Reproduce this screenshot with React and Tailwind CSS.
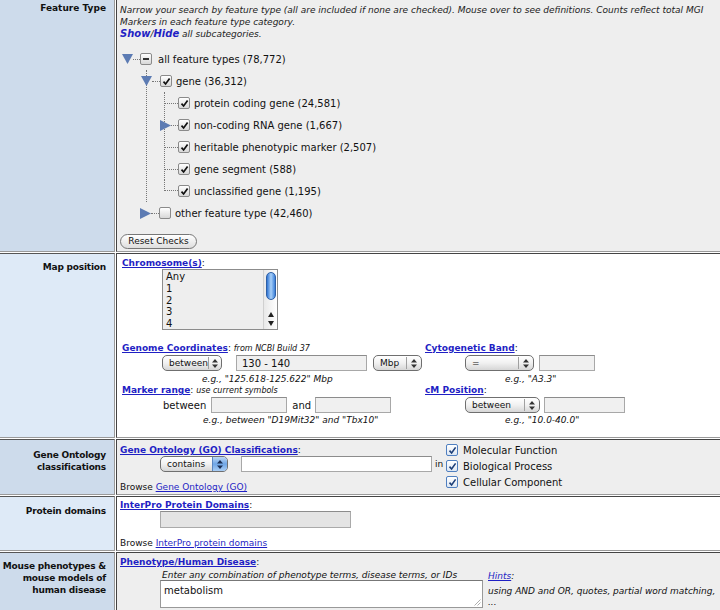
import React from 'react';

const LINK = 'text-[#1f1fc4] underline font-bold';

function Box({ checked = true, minus = false }) {
  return (
    <span className="inline-flex items-center justify-center w-[12px] h-[12px] rounded-[2px] border border-[#8a8a8a] bg-linear-to-b from-white to-[#d8d8d8] shrink-0">
      {checked && (
        <svg width="9" height="9" viewBox="0 0 9 9">
          <path d="M1.5 4.6 L3.6 7 L7.6 1.4" fill="none" stroke="#111" strokeWidth="1.7" />
        </svg>
      )}
      {minus && <span className="w-[6px] h-[2px] bg-[#333]" />}
    </span>
  );
}

function BlueBox() {
  return (
    <span className="inline-flex items-center justify-center w-[12px] h-[12px] rounded-[2px] border border-[#4f7fc0] bg-linear-to-b from-white to-[#dde7f3] shrink-0">
      <svg width="9" height="9" viewBox="0 0 9 9">
        <path d="M1.5 4.6 L3.6 7 L7.6 1.4" fill="none" stroke="#1d3f78" strokeWidth="1.6" />
      </svg>
    </span>
  );
}

function Tri({ dir }) {
  return dir === 'down' ? (
    <svg width="11" height="10" viewBox="0 0 11 10" className="shrink-0">
      <polygon points="0,0 11,0 5.5,10" fill="#5c7bb3" />
    </svg>
  ) : (
    <svg width="11" height="11" viewBox="0 0 11 11" className="shrink-0">
      <polygon points="0,0 11,5.5 0,11" fill="#5c7bb3" />
    </svg>
  );
}

function Dots({ className }) {
  return <span className={`border-t border-dotted border-[#777] shrink-0 ${className}`} />;
}

function Sel({ className, label, blue = false }) {
  return (
    <span className={`flex items-center h-[16px] rounded-[5px] border border-[#6f6f6f] bg-linear-to-b from-white via-[#f1f1f1] to-[#d6d6d6] text-[9px] leading-none text-[#111] shrink-0 overflow-hidden ${className}`}>
      <span className="flex-1 pl-[6px] whitespace-nowrap">{label}</span>
      {blue ? (
        <span className="w-[15px] self-stretch flex items-center justify-center bg-linear-to-b from-[#bcd7f5] via-[#6fa6e6] to-[#a9cdf4] border-l border-[#5a86c0]">
          <svg width="6" height="9" viewBox="0 0 6 9"><path d="M3 0 L6 3.5 H0 Z M3 9 L0 5.5 H6 Z" fill="#1b2f55" /></svg>
        </span>
      ) : (
        <>
          <span className="w-px h-[12px] bg-[#a0a0a0]" />
          <span className="w-[14px] flex justify-center">
            <svg width="6" height="9" viewBox="0 0 6 9"><path d="M3 0 L6 3.5 H0 Z M3 9 L0 5.5 H6 Z" fill="#333" /></svg>
          </span>
        </>
      )}
    </span>
  );
}

function Field({ className, value }) {
  return (
    <span className={`flex items-center h-[16px] border border-[#a8a8a8] border-t-[#8c8c8c] bg-[#f0f0f0] text-[10px] pl-[5px] text-[#111] shrink-0 ${className}`}>
      {value}
    </span>
  );
}

function Row({ label, dark, className, labelPad, children }) {
  return (
    <div className={`flex gap-[1px] ${className}`}>
      <div className={`w-[115px] shrink-0 border-t border-t-[#555] border-b border-b-[#9a9a9a] border-r border-r-[#9a9a9a] text-right pr-[8px] font-bold text-[9px] leading-[12px] tracking-[-0.2px] text-[#111] whitespace-nowrap ${dark ? 'bg-[#cddbeb]' : 'bg-[#deeaf7]'} ${labelPad}`}>
        {label}
      </div>
      <div className={`flex-1 border-t border-t-[#444] border-l border-l-[#444] border-b border-b-[#9a9a9a] pl-[3px] ${dark ? 'bg-[#eeeeee]' : 'bg-white'}`}>
        {children}
      </div>
    </div>
  );
}

function Leaf({ label, tri }) {
  return (
    <div className="h-[22px] flex items-center">
      {tri ? (
        <>
          <span className="ml-[-5px]"><Tri dir="right" /></span>
          <Dots className="w-[7px]" />
        </>
      ) : (
        <Dots className="w-[13px]" />
      )}
      <Box />
      <span className="ml-[4px] text-[10px] whitespace-nowrap">{label}</span>
    </div>
  );
}

export default function App() {
  return (
    <div className="w-[720px] h-[610px] overflow-hidden bg-white font-['DejaVu_Sans','Verdana',sans-serif] text-[#111] flex flex-col gap-[1px]">
      {/* Feature type */}
      <div className="flex gap-[1px] h-[252px] shrink-0">
        <div className="w-[115px] shrink-0 bg-[#cddbeb] border-b border-b-[#9a9a9a] border-r border-r-[#9a9a9a] text-right pr-[8px] pt-[2px] font-bold text-[9px] leading-[12px]">
          Feature Type
        </div>
        <div className="flex-1 bg-[#eeeeee] border-l border-l-[#444] border-b border-b-[#9a9a9a] pl-[3px] pt-[4px]">
          <p className="italic text-[9px] leading-[12px] text-[#222]">
            Narrow your search by feature type (all are included if none are checked). Mouse over to see definitions. Counts reflect total MGI Markers in each feature type category.
          </p>
          <p className="italic text-[9px] leading-[12px] text-[#222]">
            <span className="text-[#1f1fc4] font-bold text-[10px]">Show</span>/<span className="text-[#1f1fc4] font-bold text-[10px]">Hide</span> all subcategories.
          </p>

          <div className="mt-[8px] ml-[2px]">
            <div className="h-[22px] flex items-center">
              <Tri dir="down" />
              <Dots className="w-[7px]" />
              <Box checked={false} minus />
              <span className="ml-[6px] text-[10px]">all feature types (78,772)</span>
            </div>
            <div className="ml-[24px] border-l border-dotted border-[#777]">
              <div className="h-[22px] flex items-center ml-[-6px]">
                <Tri dir="down" />
                <Dots className="w-[8px]" />
                <Box />
                <span className="ml-[4px] text-[10px]">gene (36,312)</span>
              </div>
              <div className="ml-[17px]">
                <div className="border-l border-dotted border-[#777]">
                  <Leaf label="protein coding gene (24,581)" />
                  <Leaf label="non-coding RNA gene (1,667)" tri />
                  <Leaf label="heritable phenotypic marker (2,507)" />
                  <Leaf label="gene segment (588)" />
                </div>
                <div className="h-[22px] flex items-center">
                  <span className="w-[14px] h-[11px] self-start border-l border-b border-dotted border-[#777] shrink-0" />
                  <Box />
                  <span className="ml-[4px] text-[10px]">unclassified gene (1,195)</span>
                </div>
              </div>
            </div>
            <div className="h-[22px] flex items-center ml-[18px]">
              <Tri dir="right" />
              <Dots className="w-[8px]" />
              <Box checked={false} />
              <span className="ml-[4px] text-[10px]">other feature type (42,460)</span>
            </div>
          </div>

          <button className="mt-[10px] h-[15px] w-[77px] rounded-full border border-[#777] bg-linear-to-b from-white to-[#dedede] text-[9px] leading-none text-[#111]">
            Reset Checks
          </button>
        </div>
      </div>

      {/* Map position */}
      <Row label="Map position" className="h-[185px] shrink-0" labelPad="pt-[7px]">
        <div className="pt-[3px] pl-[2px] text-[9px] leading-[12px]">
          <a className={LINK}>Chromosome(s)</a>:
        </div>
        <div className="ml-[42px] w-[116px] h-[61px] border border-[#8c8c8c] bg-[#eeeeee] flex">
          <div className="flex-1 pl-[3px] pt-[1px] text-[10px] leading-[11.8px]">
            <div>Any</div>
            <div>1</div>
            <div>2</div>
            <div>3</div>
            <div>4</div>
          </div>
          <div className="w-[14px] flex flex-col items-center bg-linear-to-r from-[#e9e9e9] to-white border-l border-[#d0d0d0]">
            <span className="mt-[2px] w-[10px] h-[28px] rounded-full border border-[#2d5fa6] bg-linear-to-r from-[#2f74d2] via-[#a8d0f8] to-[#3a7fd8]" />
            <span className="flex-1" />
            <svg width="6" height="5" viewBox="0 0 6 5" className="mb-[4px]"><path d="M3 0 L6 5 H0 Z" fill="#222" /></svg>
            <svg width="6" height="5" viewBox="0 0 6 5" className="mb-[3px]"><path d="M0 0 H6 L3 5 Z" fill="#222" /></svg>
          </div>
        </div>

        <div className="mt-[13px] pl-[2px] grid grid-cols-[303px_1fr]">
          <div className="flex flex-col">
            <div className="text-[9px] leading-[11px] whitespace-nowrap">
              <a className={LINK}>Genome Coordinates</a>: <span className="italic text-[8px]">from NCBI Build 37</span>
            </div>
            <div className="flex items-center mt-[1px]">
              <Sel className="ml-[40px] w-[60px]" label="between" />
              <Field className="ml-[14px] w-[131px]" value="130 - 140" />
              <Sel className="ml-[6px] w-[49px]" label="Mbp" />
            </div>
            <div className="ml-[80px] italic text-[9px] leading-[11px] pt-[3px] whitespace-nowrap">e.g., "125.618-125.622" Mbp</div>
          </div>
          <div className="flex flex-col">
            <div className="text-[9px] leading-[11px]">
              <a className={LINK}>Cytogenetic Band</a>:
            </div>
            <div className="flex items-center mt-[1px]">
              <Sel className="ml-[40px] w-[69px]" label="=" />
              <Field className="ml-[5px] w-[56px]" value="" />
            </div>
            <div className="ml-[80px] italic text-[9px] leading-[11px] pt-[3px]">e.g., "A3.3"</div>
          </div>
          <div className="flex flex-col">
            <div className="text-[9px] leading-[11px] whitespace-nowrap">
              <a className={LINK}>Marker range</a>: <span className="italic text-[8px]">use current symbols</span>
            </div>
            <div className="flex items-center text-[10px] mt-[1px]">
              <span className="ml-[41px]">between</span>
              <Field className="ml-[5px] w-[76px]" value="" />
              <span className="ml-[5px]">and</span>
              <Field className="ml-[4px] w-[76px]" value="" />
            </div>
            <div className="ml-[81px] italic text-[9px] leading-[11px] pt-[2px] whitespace-nowrap">e.g., between "D19Mit32" and "Tbx10"</div>
          </div>
          <div className="flex flex-col">
            <div className="text-[9px] leading-[11px]">
              <a className={LINK}>cM Position</a>:
            </div>
            <div className="flex items-center mt-[1px]">
              <Sel className="ml-[40px] w-[75px]" label="between" />
              <Field className="ml-[4px] w-[81px]" value="" />
            </div>
            <div className="ml-[80px] italic text-[9px] leading-[11px] pt-[2px]">e.g., "10.0-40.0"</div>
          </div>
        </div>
      </Row>

      {/* Gene Ontology */}
      <Row label={<>Gene Ontology<br />classifications</>} dark className="h-[56px] shrink-0" labelPad="pt-[9px]">
        <div className="flex items-start">
          <div className="flex flex-col w-[322px] shrink-0">
            <div className="pt-[4px] text-[9px] leading-[12px] whitespace-nowrap">
              <a className={LINK}>Gene Ontology (GO) Classifications</a>:
            </div>
            <div className="flex items-center">
              <Sel className="ml-[40px] w-[68px]" label="contains" blue />
              <Field className="ml-[13px] w-[191px] bg-white" value="" />
              <span className="ml-[3px] text-[9px] self-start mt-[2px]">in</span>
            </div>
            <div className="mt-[9px] text-[9px] leading-[12px]">
              Browse <a className="text-[#1f1fc4] underline">Gene Ontology (GO)</a>
            </div>
          </div>
          <div className="pt-[2px] ml-[4px] flex flex-col text-[10px]">
            <div className="h-[16px] flex items-center gap-[5px]"><BlueBox /> Molecular Function</div>
            <div className="h-[16px] flex items-center gap-[5px]"><BlueBox /> Biological Process</div>
            <div className="h-[16px] flex items-center gap-[5px]"><BlueBox /> Cellular Component</div>
          </div>
        </div>
      </Row>

      {/* Protein domains */}
      <Row label="Protein domains" className="h-[55px] shrink-0" labelPad="pt-[8px]">
        <div className="pt-[2px] text-[9px] leading-[12px]">
          <a className={LINK}>InterPro Protein Domains</a>:
        </div>
        <span className="block ml-[40px] w-[191px] h-[17px] border border-[#aaa] border-t-[#8c8c8c] bg-[#e4e4e4]" />
        <div className="mt-[9px] text-[9px] leading-[12px]">
          Browse <a className="text-[#1f1fc4] underline">InterPro protein domains</a>
        </div>
      </Row>

      {/* Phenotypes */}
      <Row label={<>Mouse phenotypes &amp;<br />mouse models of<br />human disease</>} dark className="h-[70px] shrink-0" labelPad="pt-[7px]">
        <div className="pt-[3px] text-[9px] leading-[12px]">
          <a className={LINK}>Phenotype/Human Disease</a>:
        </div>
        <div className="flex items-start">
          <div className="flex flex-col">
            <div className="ml-[42px] italic text-[9px] leading-[11px] pt-[2px] whitespace-nowrap">
              Enter any combination of phenotype terms, disease terms, or IDs
            </div>
            <div className="ml-[40px] mt-[-1px] w-[323px] h-[28px] border border-[#999] border-t-[#777] bg-white text-[10px] pl-[3px] pt-[2px] flex items-start justify-between">
              <span>metabolism</span>
              <svg width="7" height="7" viewBox="0 0 7 7" className="self-end mr-[1px] mb-[1px]"><path d="M6.5 0.5 L0.5 6.5 M6.5 3.5 L3.5 6.5" stroke="#999" strokeWidth="0.8" /></svg>
            </div>
          </div>
          <div className="ml-[5px] pt-[3px] italic text-[9px] leading-[11px] whitespace-nowrap">
            <div><a className="text-[#1f1fc4] underline">Hints</a>:</div>
            <div className="mt-[4px]">using AND and OR, quotes, partial word matching,</div>
            <div>...</div>
          </div>
        </div>
      </Row>
    </div>
  );
}
